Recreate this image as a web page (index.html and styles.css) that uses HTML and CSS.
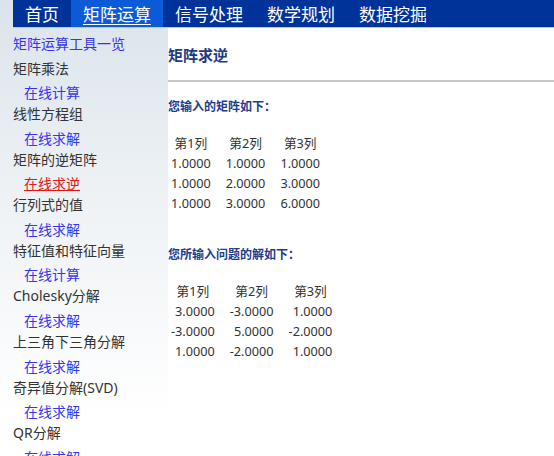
FILE: index.html
```html
<!DOCTYPE html>
<html lang="zh-CN">
<head>
<meta charset="utf-8">
<title>矩阵求逆</title>
<link rel="stylesheet" href="styles.css">
</head>
<body>
<nav class="topnav">
  <a class="nav-item" href="#">首页</a>
  <a class="nav-item active" href="#">矩阵运算</a>
  <a class="nav-item" href="#">信号处理</a>
  <a class="nav-item" href="#">数学规划</a>
  <a class="nav-item" href="#">数据挖掘</a>
</nav>
<div class="layout">
  <aside class="sidebar">
    <a class="side-title" href="#">矩阵运算工具一览</a>
    <ul class="side-list">
      <li class="cat">矩阵乘法</li>
      <li class="tool"><a href="#">在线计算</a></li>
      <li class="cat">线性方程组</li>
      <li class="tool"><a href="#">在线求解</a></li>
      <li class="cat">矩阵的逆矩阵</li>
      <li class="tool"><a class="current" href="#">在线求逆</a></li>
      <li class="cat">行列式的值</li>
      <li class="tool"><a href="#">在线求解</a></li>
      <li class="cat">特征值和特征向量</li>
      <li class="tool"><a href="#">在线计算</a></li>
      <li class="cat">Cholesky分解</li>
      <li class="tool"><a href="#">在线求解</a></li>
      <li class="cat">上三角下三角分解</li>
      <li class="tool"><a href="#">在线求解</a></li>
      <li class="cat">奇异值分解(SVD)</li>
      <li class="tool"><a href="#">在线求解</a></li>
      <li class="cat">QR分解</li>
      <li class="tool"><a href="#">在线求解</a></li>
    </ul>
  </aside>
  <main class="content">
    <h2 class="page-title">矩阵求逆</h2>
    <hr class="rule">
    <h3 class="section-title">您输入的矩阵如下：</h3>
    <table class="matrix">
      <tr><th>第1列</th><th>第2列</th><th>第3列</th></tr>
      <tr><td>1.0000</td><td>1.0000</td><td>1.0000</td></tr>
      <tr><td>1.0000</td><td>2.0000</td><td>3.0000</td></tr>
      <tr><td>1.0000</td><td>3.0000</td><td>6.0000</td></tr>
    </table>
    <h3 class="section-title second">您所输入问题的解如下：</h3>
    <table class="matrix">
      <tr><th>第1列</th><th>第2列</th><th>第3列</th></tr>
      <tr><td>3.0000</td><td>-3.0000</td><td>1.0000</td></tr>
      <tr><td>-3.0000</td><td>5.0000</td><td>-2.0000</td></tr>
      <tr><td>1.0000</td><td>-2.0000</td><td>1.0000</td></tr>
    </table>
  </main>
</div>
</body>
</html>
```

FILE: styles.css
```css
html, body {
  margin: 0;
  padding: 0;
}
body {
  font-family: "Noto Sans", "Noto Sans CJK SC", sans-serif;
  color: #333;
  background: #fff linear-gradient(#dbe4eb, #eef2f5 200px, #ffffff 420px) 0 0 / 168px 100% no-repeat;
  min-height: 456px;
  overflow: hidden;
}
.topnav {
  display: flex;
  margin-left: 13px;
  height: 27px;
  background: #003399;
  border-bottom: 1px solid #b5c8ee;
}
.nav-item {
  display: block;
  padding: 2px 12px 0;
  line-height: 25px;
  font-size: 17px;
  color: #fff;
  text-decoration: none;
}
.nav-item.active {
  background: #0b5bd9;
  text-decoration: underline;
  text-underline-offset: 3px;
}
.layout {
  display: flex;
}
.sidebar {
  width: 155px;
  flex: none;
  padding: 4.5px 0 0 13px;
  font-size: 14px;
  line-height: 21px;
}
.side-title {
  display: block;
  color: #3636f2;
  text-decoration: none;
  margin-bottom: 4px;
}
.side-list {
  list-style: none;
  margin: 0;
  padding: 0;
}
.cat {
  color: #333;
}
.tool {
  padding: 3.6px 0 0 11px;
}
.tool a {
  color: #3636f2;
  text-decoration: none;
}
.tool a.current {
  color: #e81515;
  text-decoration: underline;
}
.content {
  flex: 1;
}
.page-title {
  margin: 17px 0 0;
  font-size: 15px;
  line-height: 20px;
  font-weight: bold;
  color: #1b3a86;
}
.rule {
  margin: 15px 0 0;
  border: 0;
  height: 2px;
  background: #c8c8c8;
}
.section-title {
  margin: 17px 0 0;
  font-size: 12px;
  line-height: 16px;
  font-weight: bold;
  color: #1d3c8c;
}
.section-title.second {
  margin-top: 34px;
}
.matrix {
  margin-top: 18px;
  border-collapse: collapse;
  font-size: 12.7px;
  color: #333;
}
.matrix th,
.matrix td {
  padding: 0 12px 0 3px;
  height: 20px;
  line-height: 20px;
}
.matrix th {
  font-weight: normal;
  text-align: center;
}
.matrix td {
  text-align: right;
}
```
